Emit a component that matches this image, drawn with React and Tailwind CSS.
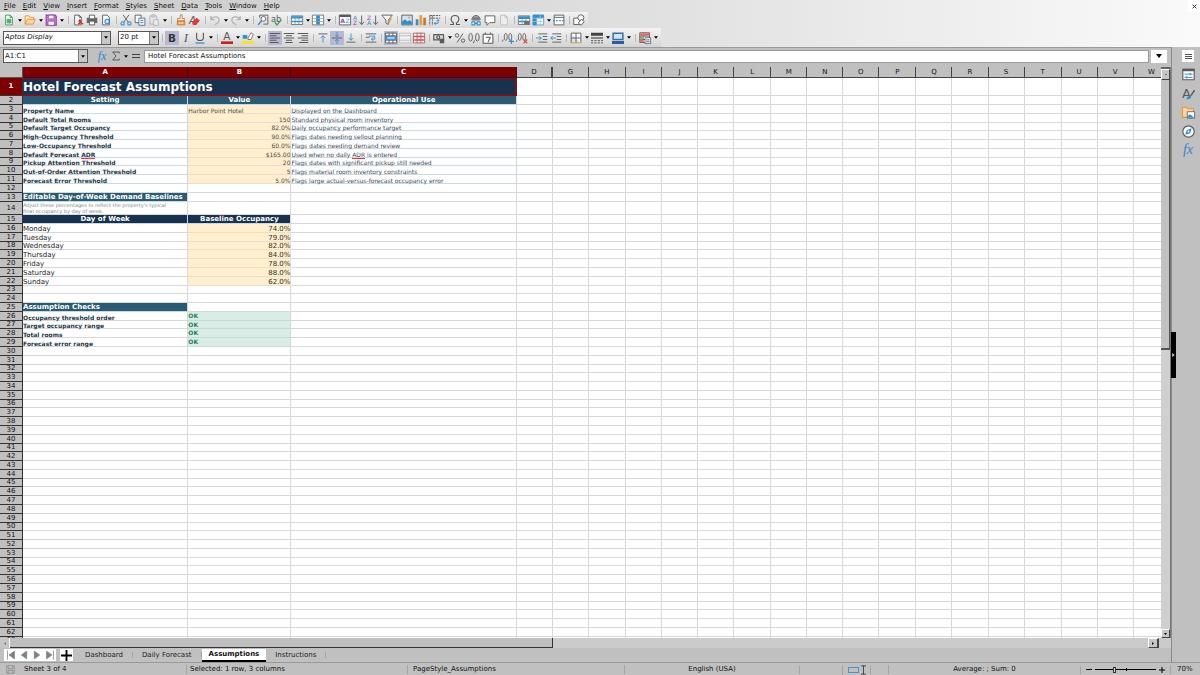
import { useState } from 'react';
import { clsx } from 'clsx';

const GREY = '#5a5a5a';
const BLUE = '#2f8fd0';

const S = ({ children, c = GREY, w = 1.2 }) => (
  <g fill="none" stroke={c} strokeWidth={w} strokeLinejoin="round">
    {children}
  </g>
);

const page = 'M3.5 1.5h6l3 3v10h-9z';

const GLYPHS = {
  new: (
    <>
      <S c="#3a9a50"><path d={page} fill="#fff" /><path d="M9.5 1.5v3h3" /></S>
      <path d="M5.5 7h5v5h-5zM8 7v5M5.5 9.5h5" fill="#8fd09e" stroke="#3a9a50" />
    </>
  ),
  open: <S c="#e8912d"><path d="M1.500 13.500v-11h5l1.500 2h5v2.500" fill="#fdf0dc" /><path d="M1.500 13.500l3-6.500h10.500l-2.500 6.500z" fill="#fbd6a2" /></S>,
  save: (
    <>
      <path d="M1.500 1.500h12l1.500 1.500v12h-13.500z" fill="#c77fd6" stroke="#8e3fa3" strokeWidth="1.400" />
      <path d="M4.500 1.500h7.500v5h-7.500zM4 9.500h8.500v5.500h-8.500z" fill="#fff" stroke="#8e3fa3" />
    </>
  ),
  pdf: <><S><path d={page} fill="#fff" /><path d="M9.500 1.500v3h3" /></S><path d="M8 13c4 0 4-6 2-5s1 5 5 5" fill="none" stroke="#d93025" strokeWidth="1.800" /></>,
  print: <><path d="M1 5h14v7h-14z" fill="#666" /><S><path d="M4.500 5.500v-4h7v4M4.500 9.500h7v5h-7z" fill="#fff" /></S></>,
  preview: <><S><path d={page} fill="#fff" /></S><circle cx="9.500" cy="10" r="3" fill="#d5eafa" stroke={BLUE} strokeWidth="1.400" /><path d="M12.500 5v8.500" stroke={BLUE} strokeWidth="1.400" /></>,
  cut: <><S><path d="M4 1l7 10M12 1l-7 10" /></S><S c={BLUE} w="1.500"><circle cx="3.500" cy="12.500" r="2.200" /><circle cx="12.500" cy="12.500" r="2.200" /></S></>,
  copy: <><S><path d="M1.500 1.500h8v10h-8z" fill="#fff" /></S><S c="#3c6fa0"><path d="M6.500 5.500h8v9.500h-8z" fill="#fff" /><path d="M8.500 8.500h4M8.500 11.500h4" /></S></>,
  paste: <S c="#b4b4b4"><path d="M2.500 2.500h9v11h-9zM5 1h4v3h-4z" /><path d="M7.500 7.500h6v7.500h-6z" fill="#eee" /></S>,
  clone: <><path d="M7 1h2.500v5h3v3h-9v-3h3.500z" fill="#fff" stroke="#b5651d" /><path d="M3 9.500h10v5h-10z" fill="#f0a04b" stroke="#c96f17" /><path d="M5 12h6" stroke="#fff" /></>,
  clear: <><text x="0" y="13" fontSize="14" fontStyle="italic" fill={GREY}>A</text><path d="M4 12l6-7 4.500 3.500-5 6h-4z" fill="#e2382d" /></>,
  undo: <S c="#b4b4b4" w="1.800"><path d="M2.500 2.500v5h5M2.500 7.500c3-5 11-5 11 1 0 3-3 4-6 6" /></S>,
  redo: <S c="#b4b4b4" w="1.800"><path d="M13.500 2.500v5h-5M13.500 7.500c-3-5-11-5-11 1 0 3 3 4 6 6" /></S>,
  find: <><S><path d="M3.500 5v-3.500h11v12h-6" /><circle cx="8.500" cy="6.500" r="3.200" fill="#fff" /></S><path d="M6 9l-4.500 5.500" stroke={BLUE} strokeWidth="2" /></>,
  spell: <><text x="0" y="10" fontSize="11" fill={GREY}>ab</text><path d="M5 11l3 3.500 6-7" fill="none" stroke="#35a56a" strokeWidth="1.800" /></>,
  table: <><path d="M0.500 2.500h15v11.500h-15z" fill="#fff" stroke={GREY} /><path d="M1 3h14v3h-14zM1 9h14v2h-14z" fill={BLUE} /><path d="M5.500 3v11M10.500 3v11" stroke="#5d93bd" /></>,
  column: <><path d="M0.500 1.500h15v13h-15z" fill="#fff" stroke={GREY} /><path d="M5.500 2h5v12h-5z" fill={BLUE} /><path d="M0.500 6h15M0.500 10h15" stroke="#7d9fb8" /></>,
  sort: <><S><path d="M0.500 1.500h15v13h-15z" fill="#fff" /></S><path d="M0.500 1h15v3h-15z" fill={GREY} /><text x="1.500" y="12.500" fontSize="8" fontWeight="bold" fill="#a040b0">A</text><text x="8.500" y="12.500" fontSize="8" fill={BLUE}>Z</text></>,
  sortAsc: <><text x="0" y="7.500" fontSize="8" fill={BLUE}>A</text><text x="0" y="15" fontSize="8" fill="#a040b0">Z</text><S><path d="M11.500 2v12M8.500 10.500l3 3.500 3.500-3.500" /></S></>,
  sortDesc: <><text x="0" y="7.500" fontSize="8" fill="#a040b0">Z</text><text x="0" y="15" fontSize="8" fill={BLUE}>A</text><S><path d="M11.500 2v12M8.500 10.500l3 3.500 3.500-3.500" /></S></>,
  filter: <><S><path d="M1 1.500h14l-5.500 6.500v6l-3-2v-4z" fill="#fff" /></S><path d="M10 8l4-5v4l-3 6z" fill="#f0a04b" /></>,
  image: <><path d="M1 1.500h14v13h-14z" fill="#cfe6f8" stroke={GREY} strokeWidth="1.200" /><path d="M1.500 14v-4l4-3 3 3 3-2 3 3v3z" fill={BLUE} /><circle cx="11" cy="4.800" r="1.500" fill="#f0a04b" /></>,
  chart: <><path d="M1 7h3.500v8h-3.500z" fill={BLUE} /><path d="M6 1.500h3.500v13.500h-3.500z" fill="#f0973a" /><path d="M11 5h3.500v10h-3.500z" fill="#bf7a30" /></>,
  pivot: <><S><path d="M1 2h14M1 2v13M1 5.500h14M4.500 2v13" strokeDasharray="3 1" /></S><S c={BLUE}><path d="M7 12.500h5v-5M10 9.500l2-2 2 2M9 10.500l-2 2 2 2" /></S></>,
  omega: <S w="1.400"><path d="M1.500 14h4.500v-2c-5-3-4-10 2-10s7 7 2 10v2h4.500" /></S>,
  link: <><S><path d="M2.500 8c0-8 11-8 11 0M3 5.500h10M2.500 8h11M8 2v6M5.500 3v5M10.500 3v5" /></S><S c={BLUE} w="1.400"><path d="M2.500 10.500h4v4h-4zM9.500 10.500h4v4h-4zM5.500 12.500h5" fill="#fff" /></S></>,
  comment: <S><path d="M1.500 2.500h13v9h-7l-3.500 3.500v-3.500h-2.500z" fill="#fff" /></S>,
  headfoot: <S c="#bcbcbc"><path d={page} fill="#eee" /><path d="M9.500 1.500v3h3" /></S>,
  printArea: <><path d="M0.500 2.500h15v11.500h-15z" fill="#fff" stroke={GREY} /><path d="M1 3h14v3.500h-14zM1 9h8v2h-8z" fill={BLUE} /><path d="M5.500 3v11M10.500 3v11" stroke="#5d93bd" /><path d="M8 9h7v5h-7z" fill="#707070" /></>,
  freeze: <><path d="M1.500 1.500h14v13h-14z" fill="#fff" stroke={BLUE} /><path d="M1 1h14.500v4.500h-9v9.500h-5.500z" fill={BLUE} /><path d="M6.500 6v8.500M11 1.500v13M1.500 10h14M1.500 5.500h14" stroke="#9cc8ea" /></>,
  split: <><S><path d="M1.500 1.500h13v13h-13zM1.500 4.500h13" fill="#fff" /></S><path d="M0 9h16" stroke={BLUE} strokeWidth="1.600" strokeDasharray="3 1" /></>,
  shapes: <S><path d="M1 5.500h8v8.500h-8z" fill="#fff" /><circle cx="10.500" cy="5" r="4" fill="#fff" /><path d="M7 12l4-5 4 3-4 5z" fill="#fff" /></S>,
  bold: <text x="2.500" y="13" fontSize="14" fontWeight="bold" fill="#333">B</text>,
  italic: <text x="5" y="13.500" fontSize="17" fontStyle="italic" fontFamily="Liberation Serif, serif" fill={GREY}>I</text>,
  underline: <><S w="1.500"><path d="M3.500 1v6.500c0 5 9 5 9 0v-6.500" /></S><path d="M2 14.700h12" stroke={BLUE} strokeWidth="1.700" /></>,
  fontColor: <><text x="3" y="11" fontSize="14" fill={GREY}>A</text><path d="M0 12.500h16v3.500h-16z" fill="#c9211e" /></>,
  highlight: <><path d="M1 4h6v5h-6z" fill={BLUE} /><path d="M8 8l4-7 3 2-3 7h-4z" fill="#fff" stroke={GREY} /><path d="M0 12h16v4h-16z" fill="#f5e62a" /></>,
  left: <S w="1.400"><path d="M1 2h14M1 5h9M1 8h14M1 11h9M1 14h12" /></S>,
  center: <S w="1.400"><path d="M1 2h14M4 5h8M1 8h14M4 11h8M3 14h10" /></S>,
  right: <S w="1.400"><path d="M1 2h14M6 5h9M1 8h14M6 11h9M3 14h12" /></S>,
  top: <><S><path d="M2 2.500h12" /></S><S c={BLUE}><path d="M8 14v-9M5 8l3-3 3 3" /></S></>,
  middle: <><S><path d="M1 8h14" /></S><S c={BLUE}><path d="M8 0v6M5.500 4l2.500 2.500 2.500-2.500M8 16v-6M5.500 12l2.500-2.500 2.500 2.500" /></S></>,
  bottom: <><S><path d="M2 13.500h12" /></S><S c={BLUE}><path d="M8 2v9M5 8l3 3 3-3" /></S></>,
  wrap: <><S><path d="M1 2.500h14M1 7h5M1 13.500h14" /></S><S c={BLUE}><path d="M5 5.500h8v4h-4M11 7l-2.500 2.500 2.500 2.500" /></S></>,
  merge: <><S><path d="M0.500 1.500h15v13h-15zM0.500 5h15M0.500 11h15M5.500 1v4M10.500 1v4M5.500 11v4M10.500 11v4" fill="#fff" /></S><path d="M1 5.500h14v5h-14z" fill={BLUE} /><path d="M3 8h10" stroke="#fff" strokeWidth="1.500" /></>,
  mergeCells: <S c="#bcbcbc"><path d="M0.500 1.500h15v13h-15zM0.500 5h15M0.500 11h15" fill="#eee" /></S>,
  unmerge: <><S c="#a06060"><path d="M0.500 1.500h15v13h-15zM5.500 1v14M10.500 1v14" fill="#fff" /></S><path d="M1 5h14v2h-14zM1 9.500h14v2h-14z" fill="#e04848" /></>,
  currency: <><S w="1.600"><path d="M1 3.500h13v7h-13z" fill="#ddd" /><circle cx="7" cy="7" r="2" /></S><path d="M9 9h6v6h-6z" fill="#5b5b5b" /></>,
  percent: <S w="1.200"><circle cx="4" cy="4.500" r="2.300" /><circle cx="12" cy="11.500" r="2.300" /><path d="M12 2l-8 12" /></S>,
  number: <S w="1.200"><ellipse cx="3.500" cy="7" rx="2.400" ry="5.200" /><ellipse cx="12.500" cy="7" rx="2.400" ry="5.200" /><path d="M8.500 11l-1.200 4" /></S>,
  date: <><S w="1.400"><path d="M1.500 3h13v12h-13zM4.500 0.500v3M11.500 0.500v3" fill="#fff" /><path d="M5 7h6l-3 6.500" /></S></>,
  addDec: <><S w="1.100"><ellipse cx="5" cy="6.500" rx="2" ry="4.700" /><ellipse cx="11" cy="6.500" rx="2" ry="4.700" /><path d="M1.500 10l-1 3" /></S><path d="M9 12.500h7M12.500 9v7" stroke={BLUE} strokeWidth="1.500" /></>,
  delDec: <><S w="1.100"><ellipse cx="5" cy="6.500" rx="2" ry="4.700" /><ellipse cx="11" cy="6.500" rx="2" ry="4.700" /><path d="M1.500 10l-1 3" /></S><path d="M10 10l5 5M15 10l-5 5" stroke="#e04848" strokeWidth="1.500" /></>,
  indent: <><S><path d="M3 2.500h12M9 6h6M9 10h6M3 13.500h12" /></S><S c={BLUE}><path d="M0 8h7M4.500 5.500l2.500 2.500-2.500 2.500" /></S></>,
  outdent: <><S><path d="M3 2.500h12M9 6h6M9 10h6M3 13.500h12" /></S><S c={BLUE}><path d="M8 8h-7M3.500 5.500l-2.500 2.500 2.500 2.500" /></S></>,
  borders: <><S><path d="M1.500 1.500h13v13M1.500 1.500v13M8 1.500v13M1.500 8h13" fill="#fff" /></S><path d="M1 14.500h14" stroke="#e8a35a" strokeWidth="1.600" /></>,
  lineStyle: <><path d="M0 1h16v4h-16z" fill="#444" /><path d="M0 7h16v2h-16z" fill="#666" /><path d="M0 11.500h16M0 14.500h16" stroke={GREY} strokeWidth="1.300" strokeDasharray="3 1.500" /></>,
  lineColor: <><path d="M1.500 1.500h13v8.500h-13z" fill="#cfe6f8" stroke="#3c6fa0" strokeWidth="2" /><path d="M0 12h16v4h-16z" fill="#2a6099" /></>,
  condition: <><S><path d="M1 1h13v13h-13zM1 5.500h13M1 10h13M5.500 1v13" fill="#fff" /></S><path d="M1.500 1.500h3.500v12h-3.500zM6 1.500h8v3.500h-8z" fill="#e86464" /><path d="M1.500 6h3.500v3.500h-3.500z" fill="#6cc07a" /><path d="M8 7.500h7.500v8h-7.500z" fill="#eee" stroke={GREY} /><path d="M9.500 10.500h4.500M9.500 13h4.500" stroke={GREY} /></>,
};

// '|' is a separator, a 'v' entry is the drop-down part of the button before it
const STANDARD = ['new', 'v', 'open', 'v', 'save', 'v', '|', 'pdf', 'print', 'preview', '|', 'cut', 'copy', 'paste', 'v', '|',
  'clone', 'clear', '|', 'undo', 'v', 'redo', 'v', '|', 'find', 'spell', '|', 'table', 'v', 'column', 'v', '|',
  'sort', 'sortAsc', 'sortDesc', 'filter', '|', 'image', 'chart', 'pivot', '|', 'omega', 'v', 'link', 'comment', 'headfoot', '|',
  'printArea', 'freeze', 'v', 'split', '|', 'shapes'];

const FORMATTING = ['|', 'bold', 'italic', 'underline', 'v', '|', 'fontColor', 'v', 'highlight', 'v', '|', 'left', 'center', 'right', '|',
  'top', 'middle', 'bottom', '|', 'wrap', '|', 'merge', 'mergeCells', 'unmerge', '|', 'currency', 'v', 'percent', 'number', 'date', '|',
  'addDec', 'delDec', '|', 'indent', 'outdent', '|', 'borders', 'v', 'lineStyle', 'v', 'lineColor', 'v', '|', 'condition', 'v'];

const PRESSED = ['bold', 'left', 'middle', 'merge'];
const DISABLED = ['paste', 'undo', 'redo', 'headfoot', 'mergeCells'];

const MENUS = ['File', 'Edit', 'View', 'Insert', 'Format', 'Styles', 'Sheet', 'Data', 'Tools', 'Window', 'Help'];
const COLUMNS = ['D', 'G', 'H', 'I', 'J', 'K', 'L', 'M', 'N', 'O', 'P', 'Q', 'R', 'S', 'T', 'U', 'V', 'W'];
const TABS = ['Dashboard', 'Daily Forecast', 'Assumptions', 'Instructions'];

const SETTINGS = {
  3: ['Property Name', 'Harbor Point Hotel', 'Displayed on the Dashboard'],
  4: ['Default Total Rooms', '150', 'Standard physical room inventory'],
  5: ['Default Target Occupancy', '82.0%', 'Daily occupancy performance target'],
  6: ['High-Occupancy Threshold', '90.0%', 'Flags dates needing sellout planning'],
  7: ['Low-Occupancy Threshold', '60.0%', 'Flags dates needing demand review'],
  8: ['Default Forecast ADR', '$165.00', 'Used when no daily ADR is entered'],
  9: ['Pickup Attention Threshold', '20', 'Flags dates with significant pickup still needed'],
  10: ['Out-of-Order Attention Threshold', '5', 'Flags material room inventory constraints'],
  11: ['Forecast Error Threshold', '5.0%', 'Flags large actual-versus-forecast occupancy error'],
};

const BASELINES = {
  16: ['Monday', '74.0%'],
  17: ['Tuesday', '79.0%'],
  18: ['Wednesday', '82.0%'],
  19: ['Thursday', '84.0%'],
  20: ['Friday', '78.0%'],
  21: ['Saturday', '88.0%'],
  22: ['Sunday', '62.0%'],
};

const CHECKS = {
  26: 'Occupancy threshold order',
  27: 'Target occupancy range',
  28: 'Total rooms',
  29: 'Forecast error range',
};

const Caret = ({ className = 'w-1 h-[3px]' }) => (
  <svg viewBox="0 0 6 4" className={className} aria-hidden="true">
    <path d="M0 0h6l-3 4z" fill="#000" />
  </svg>
);

const Tool = ({ name }) => {
  if (name === '|') return <span className="w-1.5 flex justify-center"><span className="w-px h-2 bg-[#b8b8b8]" /></span>;
  if (name === 'v') {
    return (
      <button type="button" aria-label="More options" className="w-[7px] h-3 flex items-center justify-center">
        <Caret />
      </button>
    );
  }
  return (
    <button
      type="button"
      aria-label={name}
      disabled={DISABLED.includes(name)}
      className={clsx('w-3.5 h-3.5 flex items-center justify-center', PRESSED.includes(name) && 'bg-[#b9b8d2]')}
    >
      <svg viewBox="0 0 16 16" className="w-3 h-3 overflow-visible">{GLYPHS[name]}</svg>
    </button>
  );
};

const Combo = ({ label, value, className, inputClass }) => {
  const [text, setText] = useState(value);
  return (
    <div className={clsx('flex h-3.5 bg-white border border-[#555]', className)}>
      <input
        aria-label={label}
        value={text}
        onChange={(event) => setText(event.target.value)}
        className={clsx('flex-1 min-w-0 px-px outline-none', inputClass)}
      />
      <button type="button" aria-label={`${label} list`} className="w-[9px] bg-[#c8c8c8] border-l border-[#777] flex items-center justify-center">
        <Caret />
      </button>
    </div>
  );
};

const withSpelling = (text) => {
  if (!text.includes('ADR')) return text;
  const [before, after] = text.split('ADR');
  return (
    <>
      {before}
      <span className="border-b border-red-500">ADR</span>
      {after}
    </>
  );
};

const LINE = 'border-r border-b border-[#d8d8d8]';
const SOFT = 'border-r border-b border-[#c9d8e2]';
const BAND = 'border-r border-b border-[#c9d8e2] bg-[#295c74] text-white font-bold text-[7px]';
const NAVY = 'border-r border-b border-[#c9d8e2] bg-[#17324f] text-white font-bold text-[7px]';
const INPUT = 'border-r border-b border-[#e6e0cc] bg-[#ffefcf]';
const LOW = 'pt-0.5 leading-[5px]';

const dataCells = (row) => {
  if (row === 1) {
    return (
      <td colSpan={3} className="bg-[#17324f] border-[#7f0f18] border-t border-b-2 border-r-2 text-white font-bold text-[12px] leading-[14px] text-left">
        Hotel Forecast Assumptions
      </td>
    );
  }
  if (row === 2) {
    return ['Setting', 'Value', 'Operational Use'].map((title) => (
      <td key={title} className={clsx(BAND, 'text-center')}>{title}</td>
    ));
  }
  if (SETTINGS[row]) {
    const [name, value, use] = SETTINGS[row];
    return (
      <>
        <td className={clsx(SOFT, LOW, 'font-bold text-[#24384a]')}>{withSpelling(name)}</td>
        <td className={clsx(INPUT, LOW, 'text-[#4f4b3e]', row !== 3 && 'text-right')}>{value}</td>
        <td className={clsx(SOFT, LOW, 'text-[#3b4956]')}>{withSpelling(use)}</td>
      </>
    );
  }
  if (BASELINES[row]) {
    const [day, value] = BASELINES[row];
    return (
      <>
        <td className={clsx(LINE, 'pt-px leading-[6px] text-[7px] text-[#222]')}>{day}</td>
        <td className={clsx(INPUT, 'pt-px leading-[6px] text-[7px] text-right text-[#33301f]')}>{value}</td>
        <td className={LINE} />
      </>
    );
  }
  if (CHECKS[row]) {
    return (
      <>
        <td className={clsx(LINE, LOW, 'font-bold text-[#24384a] align-bottom')}>{CHECKS[row]}</td>
        <td className="border-r border-b border-[#c5ddd4] bg-[#d9ece5] font-bold text-[#1f7f5f] align-top">OK</td>
        <td className={LINE} />
      </>
    );
  }
  if (row === 13 || row === 25) {
    return (
      <>
        <td className={BAND}>{row === 13 ? 'Editable Day-of-Week Demand Baselines' : 'Assumption Checks'}</td>
        <td className={LINE} />
        <td className={LINE} />
      </>
    );
  }
  if (row === 14) {
    return (
      <>
        <td className={clsx(LINE, 'text-[5px] text-[#7b8794] leading-[6px]')}>
          Adjust these percentages to reflect the property&apos;s typical
          <br />
          final occupancy by day of week.
        </td>
        <td className={LINE} />
        <td className={LINE} />
      </>
    );
  }
  if (row === 15) {
    return (
      <>
        <td className={clsx(NAVY, 'text-center')}>Day of Week</td>
        <td className={clsx(NAVY, 'text-center')}>Baseline Occupancy</td>
        <td className={LINE} />
      </>
    );
  }
  return (
    <>
      <td className={LINE} />
      <td className={LINE} />
      <td className={LINE} />
    </>
  );
};

const rowHeight = (row) => {
  if (row === 1) return 'h-[18px]';
  if (row === 14) return 'h-[13px]';
  return row % 9 === 0 || row % 9 === 5 ? 'h-2' : 'h-[9px]';
};

const Sheet = () => (
  <table className="table-fixed w-[1170px] border-separate border-spacing-0 bg-white text-[6px] leading-[7px] whitespace-nowrap text-left">
    <colgroup>
      <col className="w-[23px]" />
      <col className="w-[165px]" />
      <col className="w-[103px]" />
      <col className="w-[225px]" />
      {COLUMNS.map((name, i) => (
        <col key={name} className={i % 4 === 2 ? 'w-[37px]' : 'w-[36px]'} />
      ))}
    </colgroup>
    <thead>
      <tr className="h-[11px] text-[7px] text-center">
        <td className="bg-[#c0c0c0] border-r border-b border-[#555]" />
        {['A', 'B', 'C'].map((name) => (
          <th key={name} scope="col" className="bg-[#7f0000] text-white border-r border-b border-[#3d0a20]">{name}</th>
        ))}
        {COLUMNS.map((name) => (
          <th key={name} scope="col" className={clsx('bg-[#c0c0c0] font-normal border-r border-b border-[#444]', name === 'D' && 'border-r-2')}>
            {name}
          </th>
        ))}
      </tr>
    </thead>
    <tbody>
      {Array.from({ length: 63 }, (_, i) => i + 1).map((row) => (
        <tr key={row} className={rowHeight(row)}>
          <th
            scope="row"
            className={clsx(
              'border-r border-b border-[#333] text-[7px] text-center',
              row === 1 ? 'bg-[#7f0000] text-white' : 'bg-[#c0c0c0] font-normal text-[#111]'
            )}
          >
            {row}
          </th>
          {dataCells(row)}
          {COLUMNS.map((name) => (
            <td key={name} className={LINE} />
          ))}
        </tr>
      ))}
    </tbody>
  </table>
);

const TopBar = () => (
  <header className="bg-linear-to-r from-[#c8c8c8] via-[#dedede] to-[#fafafa]">
    <div className="flex items-center justify-between h-3">
      <nav className="flex pl-px">
        {MENUS.map((name) => (
          <button key={name} type="button" className="pl-[3px] pr-1 leading-3">
            <span className="underline decoration-1">{name[0]}</span>
            {name.slice(1)}
          </button>
        ))}
      </nav>
      <button type="button" aria-label="Close" className="w-3 h-3 flex items-center justify-center bg-white">
        <svg viewBox="0 0 8 8" className="w-[5px] h-[5px]"><path d="M1 1l6 6M7 1l-6 6" stroke="#222" strokeWidth="1.500" /></svg>
      </button>
    </div>
    <div className="flex items-center w-fit h-4 pl-0.5 pr-0.5 bg-linear-to-b from-[#f4f4f4] to-[#d8d8d8]">
      {STANDARD.map((name, i) => <Tool key={i} name={name} />)}
    </div>
    <div className="flex items-center w-fit h-[19px] pl-[3px] pr-0.5 bg-linear-to-b from-[#f4f4f4] to-[#d4d4d4]">
      <Combo label="Font name" value="Aptos Display" className="w-[108px]" inputClass="italic" />
      <Combo label="Font size" value="20 pt" className="w-[41px] ml-[7px]" />
      {FORMATTING.map((name, i) => <Tool key={i} name={name} />)}
    </div>
  </header>
);

const FormulaBar = () => {
  const [formula, setFormula] = useState('Hotel Forecast Assumptions');
  return (
    <div className="flex items-center h-5 pl-[3px] pr-1 pb-[3px] border-t border-[#9a9a9a]">
      <Combo label="Name box" value="A1:C1" className="w-[85px]" />
      <button type="button" aria-label="Function wizard" className="ml-2 w-3 text-[12px] leading-3 italic font-['Liberation_Serif',serif] text-[#2f86c8]">fx</button>
      <button type="button" aria-label="Select function" className="ml-0.5 w-3 h-3 flex items-center justify-center">
        <svg viewBox="0 0 12 14" className="w-2 h-2.5"><path d="M11 3v-2h-10l5 6-5 6h10v-2" fill="none" stroke="#4d4d4d" strokeWidth="1.300" /></svg>
      </button>
      <Tool name="v" />
      <button type="button" aria-label="Formula" className="w-3.5 h-3 flex flex-col items-center justify-center gap-0.5">
        <span className="w-2 h-px bg-[#444]" />
        <span className="w-2 h-px bg-[#444]" />
      </button>
      <input
        aria-label="Input line"
        value={formula}
        onChange={(event) => setFormula(event.target.value)}
        className="flex-1 min-w-0 h-[13px] ml-px px-[3px] bg-white border border-[#999] outline-none"
      />
      <button type="button" aria-label="Expand formula bar" className="w-4 h-[13px] ml-0.5 bg-white flex items-center justify-center">
        <Caret className="w-2 h-1" />
      </button>
    </div>
  );
};

const raised = 'bg-[#c6c6c6] border border-t-white border-l-white border-r-[#444] border-b-[#444] flex items-center justify-center';

const VerticalScroll = () => (
  <div className="w-[10px] flex flex-col bg-[#d0d0d0] border-r border-[#777]">
    <div className="h-0.5 bg-[#666]" />
    <button type="button" aria-label="Scroll up" className={clsx(raised, 'h-[11px]')}>
      <span className="w-0.5 h-px bg-[#666]" />
    </button>
    <div className="h-[270px] bg-[#c2c2c2] border-b-2 border-r border-[#555]" />
    <div className="flex-1" />
    <button type="button" aria-label="Scroll down" className={clsx(raised, 'h-[9px]')}><Caret className="w-[3px] h-0.5" /></button>
  </div>
);

const HorizontalScroll = () => (
  <div className="flex h-[10px] bg-[#cbcbcb] pr-3">
    <button type="button" aria-label="Scroll left" className="w-[10px] bg-[#c6c6c6] border-r border-white flex items-center justify-center">
      <svg viewBox="0 0 4 6" className="w-0.5 h-[3px]"><path d="M4 0v6l-4-3z" fill="#777" /></svg>
    </button>
    <div className="w-[543px] bg-[#bfbfbf] border-b border-r border-[#333]" />
    <div className="flex-1" />
    <button type="button" aria-label="Scroll right" className={clsx(raised, 'w-[11px] border-r-2')}>
      <svg viewBox="0 0 4 6" className="w-0.5 h-[3px]"><path d="M0 0v6l4-3z" /></svg>
    </button>
  </div>
);

const NAV = [
  ['First sheet', 'M2 0v12M11 1v10l-7-5z'],
  ['Previous sheet', 'M10 1v10l-7-5z'],
  ['Next sheet', 'M3 1v10l7-5z'],
  ['Last sheet', 'M11 0v12M2 1v10l7-5z'],
];

const SheetTabs = () => {
  const [active, setActive] = useState('Assumptions');
  return (
    <div className="flex items-center h-[14px] pl-1">
      <div className="flex bg-white">
        {NAV.map(([label, d]) => (
          <button key={label} type="button" aria-label={label} className="w-[13px] h-3 flex items-center justify-center">
            <svg viewBox="0 0 13 12" className="w-2.5 h-2.5"><path d={d} fill="#808080" stroke="#808080" /></svg>
          </button>
        ))}
      </div>
      <button type="button" aria-label="Add sheet" className="w-[13px] h-3 ml-1 flex items-center justify-center bg-white">
        <svg viewBox="0 0 12 12" className="w-[11px] h-[11px]"><path d="M6 0v12M0 6h12" stroke="#000" strokeWidth="2" /></svg>
      </button>
      <div role="tablist" className="flex items-center ml-[3px]">
        {TABS.map((name) => (
          <div key={name} className="flex items-center">
            <button
              type="button"
              role="tab"
              aria-selected={active === name}
              onClick={() => setActive(name)}
              className={clsx(
                'h-[13px] leading-[11px]',
                active === name ? 'px-[7px] bg-white font-bold border-b-2 border-black' : 'px-[9px] text-[#222]'
              )}
            >
              {name}
            </button>
            {active !== name && <span className="w-px h-1.5 bg-[#a4a4a4]" />}
          </div>
        ))}
      </div>
    </div>
  );
};

const StatusBar = () => {
  const [zoom, setZoom] = useState(70);
  return (
    <footer className="grid grid-cols-[186fr_221fr_217fr_175fr_43fr_28fr_18fr_192fr_90px_30px] items-center h-[13px] pt-px border-t border-[#9a9a9a] whitespace-nowrap">
      <div className="flex items-center gap-[9px] pl-1.5">
        <svg viewBox="0 0 12 12" className="w-[9px] h-[9px]" fill="none" stroke="#888">
          <path d="M1 1h10v10h-10zM3 1v4h6v-4M3 11v-4h6v4" />
        </svg>
        Sheet 3 of 4
      </div>
      <div className="border-l border-[#a4a4a4] pl-[3px]">Selected: 1 row, 3 columns</div>
      <div className="border-l border-[#a4a4a4] pl-[5px]">PageStyle_Assumptions</div>
      <div className="border-l border-[#a4a4a4] text-center">English (USA)</div>
      <div className="border-l border-[#a4a4a4] h-2" />
      <div className="border-l border-[#a4a4a4] flex justify-center items-center gap-0.5">
        <span className="w-[11px] h-1.5 border border-[#4a94c8]" />
        <svg viewBox="0 0 6 12" className="w-[5px] h-2.5"><path d="M0 1h6M3 1v10M0 11h6" stroke="#333" fill="none" /></svg>
      </div>
      <div className="border-l border-[#a4a4a4] h-2" />
      <div className="border-l border-[#a4a4a4] text-center">Average: ; Sum: 0</div>
      <div className="border-l border-[#a4a4a4] flex items-center justify-center gap-[3px]">
        <button type="button" aria-label="Zoom out" className="w-1.5 h-1.5 flex items-center"><span className="w-full h-px bg-black" /></button>
        <div className="relative w-[61px] h-2 flex items-center">
          <span className="w-full h-px bg-black" />
          <span className="absolute left-1/2 w-px h-[3px] bg-black" />
          <span className="absolute w-[3px] h-1.5 bg-[#ddd] border border-[#333]" style={{ left: `${zoom / 2 - 5}%` }} />
          <input
            type="range"
            aria-label="Zoom"
            min="20"
            max="200"
            value={zoom}
            onChange={(event) => setZoom(Number(event.target.value))}
            className="absolute inset-0 w-full h-full opacity-0"
          />
        </div>
        <button type="button" aria-label="Zoom in" className="w-1.5 h-1.5">
          <svg viewBox="0 0 6 6" className="w-1.5 h-1.5"><path d="M3 0v6M0 3h6" stroke="#000" /></svg>
        </button>
      </div>
      <div className="border-l border-[#a4a4a4] pl-1.5">{zoom}%</div>
    </footer>
  );
};

const SIDEBAR = [
  ['Properties', <><path d="M1 1.500h14v13h-14z" fill="#fff" stroke={GREY} strokeWidth="1.400" /><path d="M1 1h14v3h-14z" fill={GREY} /><S c={BLUE}><path d="M3 7.500h10M3 11.500h10M10 6v3M6 10v3" /></S></>],
  ['Styles', <><text x="0" y="13" fontSize="16" fill={GREY}>A</text><path d="M15.500 4l-5 7" stroke={GREY} strokeWidth="1.800" /><path d="M4 15c3 0 2-5 6-5 3 2 0 6-6 5z" fill={BLUE} /></>],
  ['Gallery', <><path d="M0.500 14v-12.500h5l1.500 2h7v10.500z" fill="#fbd6a2" stroke="#e8912d" strokeWidth="1.300" /><path d="M6.500 7h9v8h-9z" fill="#fff" stroke={GREY} /><path d="M7 14.500v-2.500l3-2 5 4.500z" fill={BLUE} /></>],
  ['Navigator', <><circle cx="8" cy="8" r="7" fill="#fff" stroke={GREY} strokeWidth="1.400" /><path d="M12 4l-2 6-6 2 2-6z" fill={BLUE} /><circle cx="8" cy="8" r="1.200" fill="#fff" /></>],
];

const Sidebar = () => (
  <aside className="relative w-[29px] flex flex-col items-center gap-1.5 pt-[3px] pl-1 border-l border-[#8a8a8a]">
    <button type="button" aria-label="Sidebar settings" className="w-3 h-3 bg-white flex flex-col items-center justify-center gap-px">
      <span className="w-[7px] h-px bg-[#555]" />
      <span className="w-[7px] h-px bg-[#555]" />
      <span className="w-[7px] h-px bg-[#555]" />
    </button>
    {SIDEBAR.map(([label, icon]) => (
      <button key={label} type="button" aria-label={label} className="w-[13px] h-[13px]">
        <svg viewBox="0 0 16 16" className="w-[13px] h-[13px] overflow-visible">{icon}</svg>
      </button>
    ))}
    <button type="button" aria-label="Functions" className="h-3 text-[14px] leading-3 italic font-['Liberation_Serif',serif] text-[#2f86c8]">fx</button>
    <button type="button" aria-label="Hide sidebar" className="absolute -left-px top-1/2 -translate-y-1/2 w-[5px] h-[46px] bg-black flex items-center justify-center">
      <svg viewBox="0 0 4 6" className="w-[3px] h-1"><path d="M0 0v6l4-3z" fill="#ccc" /></svg>
    </button>
  </aside>
);

export default function App() {
  return (
    <div className="h-screen flex flex-col overflow-hidden bg-[#c0c0c0] text-[7px] leading-[9px] text-[#111] font-['DejaVu_Sans',sans-serif]">
      <TopBar />
      <div className="flex-1 min-h-0 flex">
        <main className="flex-1 min-w-0 flex flex-col">
          <FormulaBar />
          <div className="flex-1 min-h-0 flex">
            <div className="flex-1 min-w-0 overflow-hidden">
              <Sheet />
            </div>
            <VerticalScroll />
          </div>
          <HorizontalScroll />
          <SheetTabs />
        </main>
        <Sidebar />
      </div>
      <StatusBar />
    </div>
  );
}
